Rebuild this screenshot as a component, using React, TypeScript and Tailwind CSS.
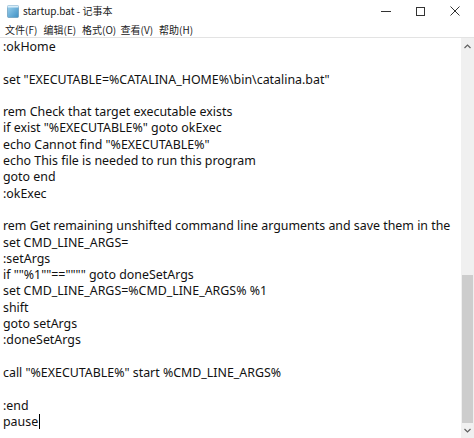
import React from 'react';

const LINES = [
  ':okHome',
  '',
  'set "EXECUTABLE=%CATALINA_HOME%\\bin\\catalina.bat"',
  '',
  'rem Check that target executable exists',
  'if exist "%EXECUTABLE%" goto okExec',
  'echo Cannot find "%EXECUTABLE%"',
  'echo This file is needed to run this program',
  'goto end',
  ':okExec',
  '',
  'rem Get remaining unshifted command line arguments and save them in the',
  'set CMD_LINE_ARGS=',
  ':setArgs',
  'if ""%1""=="""" goto doneSetArgs',
  'set CMD_LINE_ARGS=%CMD_LINE_ARGS% %1',
  'shift',
  'goto setArgs',
  ':doneSetArgs',
  '',
  'call "%EXECUTABLE%" start %CMD_LINE_ARGS%',
  '',
  ':end',
];

const MENUS = ['文件(F)', '编辑(E)', '格式(O)', '查看(V)', '帮助(H)'];

const uiFont = { fontFamily: '"Noto Sans CJK SC", "Noto Sans", sans-serif' };

function NotepadIcon() {
  return (
    <svg width="12" height="13" viewBox="0 0 12 13">
      <defs>
        <linearGradient id="np" x1="0" y1="0" x2="1" y2="1">
          <stop offset="0" stopColor="#9fd3ef" />
          <stop offset="1" stopColor="#3d8fc4" />
        </linearGradient>
      </defs>
      <rect x="0.5" y="0.5" width="11" height="12" rx="1" fill="url(#np)" stroke="#5a8fb0" strokeWidth="0.6" />
      <rect x="0.5" y="0.5" width="11" height="2" fill="#d9eef9" />
    </svg>
  );
}

export default function App() {
  return (
    <div className="flex h-[438px] w-[474px] flex-col overflow-hidden bg-white text-black">
      <div className="flex h-[22px] items-center pl-[7px]" style={uiFont}>
        <NotepadIcon />
        <span className="ml-[4px] text-[10px] leading-none text-[#1a1a1a]">startup.bat - 记事本</span>
        <div className="ml-auto flex h-full items-center">
          <div className="flex h-full w-[35px] items-center justify-center">
            <div className="h-px w-[10px] bg-[#333]" />
          </div>
          <div className="flex h-full w-[35px] items-center justify-center">
            <div className="h-[9px] w-[9px] border border-[#333]" />
          </div>
          <div className="flex h-full w-[36px] items-center justify-center pr-[2px]">
            <svg width="10" height="10" viewBox="0 0 10 10">
              <path d="M0.5 0.5 L9.5 9.5 M9.5 0.5 L0.5 9.5" stroke="#333" strokeWidth="1" />
            </svg>
          </div>
        </div>
      </div>
      <div className="flex h-[15px] items-center pl-[5px] text-[10px] leading-none text-[#222]" style={uiFont}>
        {MENUS.map((m) => (
          <span key={m} className="w-[38.5px] shrink-0">{m}</span>
        ))}
      </div>
      <div className="flex min-h-0 flex-1 border-t border-[#e3e3e3]">
        <div
          className="min-w-0 flex-1 whitespace-pre pl-[3px] pt-[1px] text-[12.4px] leading-[16.3px] text-[#111]"
          style={{ fontFamily: '"Noto Sans", "Noto Sans CJK SC", sans-serif' }}
        >
          {LINES.map((l, i) => (
            <div key={i} className="h-[16.3px]">{l}</div>
          ))}
          <div className="flex h-[16.3px] items-center">
            <span>pause</span>
            <span className="ml-px h-[15px] w-px bg-black" />
          </div>
        </div>
        <div className="flex w-[13px] flex-col items-center bg-[#f0f0f0]">
          <div className="flex h-[14px] items-center justify-center pt-[2px]">
            <svg width="7" height="5" viewBox="0 0 7 5">
              <path d="M0.5 4 L3.5 1 L6.5 4" fill="none" stroke="#606060" strokeWidth="1.2" />
            </svg>
          </div>
          <div className="flex-1" />
          <div className="h-[148px] w-[11px] bg-[#cdcdcd]" />
          <div className="flex h-[15px] items-center justify-center">
            <svg width="7" height="5" viewBox="0 0 7 5">
              <path d="M0.5 1 L3.5 4 L6.5 1" fill="none" stroke="#606060" strokeWidth="1.2" />
            </svg>
          </div>
        </div>
      </div>
    </div>
  );
}
